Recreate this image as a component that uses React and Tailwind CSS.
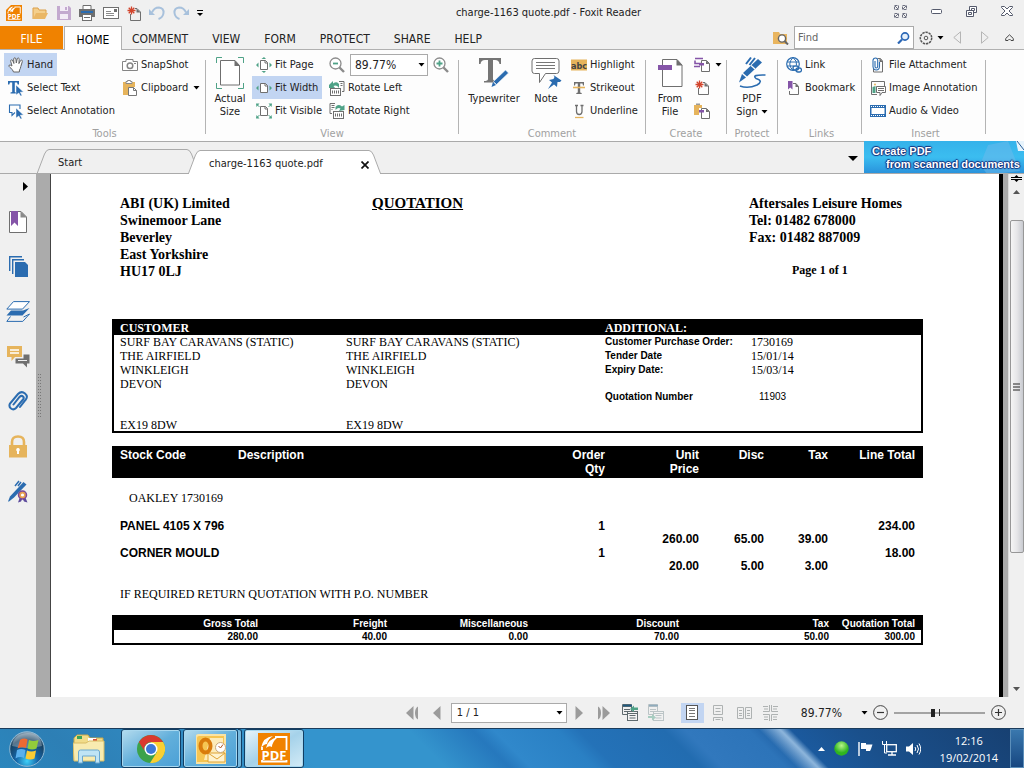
import React from "react";

const ui = "font-['DejaVu_Sans_Condensed','DejaVu_Sans',sans-serif]";
const serif = "font-['Liberation_Serif',serif]";
const sans = "font-['Liberation_Sans',sans-serif]";

const GREY = "#6f6f6f";
const BLUE = "#2b6cb0";
const GREEN = "#4fa287";
const GOLD = "#e6b45c";
const PURPLE = "#8555a8";
const RED = "#d2452d";

function Icon({ w = 16, h = 16, box, children, className = "" }) {
  return (
    <svg width={w} height={h} viewBox={box || `0 0 ${w} ${h}`} fill="none" aria-hidden="true" className={"shrink-0 " + className}>
      {children}
    </svg>
  );
}

const Caret = ({ className = "" }) => (
  <Icon w={7} h={4} className={className}>
    <path d="M0.5 0h6L3.5 3.6z" fill="#000" />
  </Icon>
);

const Star = ({ x, y, r = 4 }) => (
  <g stroke={RED} strokeWidth="1.3" transform={`translate(${x} ${y})`}>
    <path d={`M0 ${-r}V${r}M${-r} 0H${r}M${-r * 0.7} ${-r * 0.7}L${r * 0.7} ${r * 0.7}M${-r * 0.7} ${r * 0.7}L${r * 0.7} ${-r * 0.7}`} />
  </g>
);

const FoxitLogo = ({ size = 16, className }) => (
  <Icon w={size} h={size} box="0 0 32 32" className={className}>
    <path d={size > 16 ? "M0 0H32V32H0z" : "M10 0H32V32H0V10z"} fill="#f08200" />
    <path d="M4 14v14.500h24.500V4H17" stroke="#fff" strokeWidth="1.8" />
    <path d="M3 15Q5 4 15 3Q10 6 9 11Q6 11 3 15zM8 15Q10 6 20 4Q14 9 14 14Q11 12 8 15z" fill="#fff" />
    <rect x="2" y="17" width="28" height="10" fill="#f08200" />
    <text x="16" y="27" textAnchor="middle" fontSize="13" fontWeight="bold" fill="#fff" fontFamily="Open Sans, sans-serif">PDF</text>
  </Icon>
);

const icons = {
  open: (
    <Icon w={17} h={14}>
      <path d="M1 13V2h5l1 2h7v3" fill="#f4cf8c" stroke="#dba04a" />
      <path d="M1 13L4 7h12l-3 6z" fill="#eab765" />
    </Icon>
  ),
  save: (
    <Icon w={14} h={14}>
      <path d="M0 0h12l2 2v12H0z" fill="#c3aacf" />
      <rect x="3" y="0" width="8" height="5" fill="#f3edf6" />
      <rect x="8" y="1" width="2" height="3" fill="#c3aacf" />
      <rect x="3" y="8" width="8" height="5" fill="#f3edf6" />
    </Icon>
  ),
  print: (
    <Icon w={16} h={16}>
      <path d="M4 5V.5h8V5" stroke={GREY} fill="#fff" />
      <rect x="0" y="4" width="16" height="8" fill={GREY} />
      <rect x="2" y="6" width="12" height="2" fill={BLUE} />
      <rect x="3.5" y="9.5" width="9" height="6" fill="#fff" stroke={GREY} />
      <path d="M5 12.5h6" stroke={GREY} />
    </Icon>
  ),
  mail: (
    <Icon w={16} h={12}>
      <rect x=".5" y=".5" width="15" height="11" fill="#fff" stroke={GREY} />
      <path d="M3 4.500h5M3 6.500h8M3 8.500h8" stroke="#8b8b8b" />
      <rect x="11" y="2" width="3" height="3" fill={GREY} />
    </Icon>
  ),
  newDoc: (
    <Icon w={14} h={15}>
      <path d="M3.500 8v6.500h10V6L10 2.500H8" stroke={GREY} fill="none" />
      <path d="M9.500 2.500V6.500h4z" fill={GREY} />
      <Star x={4.5} y={4.5} r={4} />
    </Icon>
  ),
  undo: (
    <Icon w={16} h={14}>
      <path d="M3 6.500Q5 1.500 10 1.500Q15 2 14.500 7Q14 11.500 9.500 13" stroke="#a8c1dc" strokeWidth="2" />
      <path d="M0 3v6h6z" fill="#a8c1dc" />
    </Icon>
  ),
  redo: (
    <Icon w={16} h={14}>
      <path d="M13 6.500Q11 1.500 6 1.500Q1 2 1.500 7Q2 11.500 6.500 13" stroke="#a8c1dc" strokeWidth="2" />
      <path d="M16 3v6h-6z" fill="#a8c1dc" />
    </Icon>
  ),
  hand: (
    <Icon>
      <path d="M5.500 15Q5 12.500 2 10.500Q.3 9 1 8.200Q2 7.500 4 9L2.700 4.300Q2.500 3 3.500 2.800Q4.400 2.700 4.900 4L5.900 6.500 5.700 2Q5.800.8 6.700.8Q7.700.8 7.900 2L8.300 6 9.200 1.900Q9.500.8 10.400 1Q11.300 1.200 11.200 2.400L10.900 6.600 12.500 3.600Q13.100 2.800 13.900 3.200Q14.600 3.600 14.300 4.600L12.800 9.500Q12.400 12 11.500 13L11.300 15z" fill="#fff" stroke="#666" />
    </Icon>
  ),
  selectText: (
    <Icon>
      <path d="M0 1h11v3.500H9.700L9 2.500H6.800V12l1.700.6v.9H2.500v-.9L4.200 12V2.500H2L1.300 4.500H0z" fill={BLUE} />
      <path d="M8 5l7.500 7-3.200.2 1.800 3.300-1.600.5-1.700-3L8 15z" fill={BLUE} stroke="#fff" strokeWidth=".5" />
    </Icon>
  ),
  selectNote: (
    <Icon>
      <path d="M7 9.500l-3 3v-3H1.500V2H12v4" stroke={BLUE} strokeWidth="1.100" />
      <path d="M8 5l7.500 7-3.200.2 1.800 3.300-1.600.5-1.700-3L8 15z" fill={BLUE} stroke="#fff" strokeWidth=".5" />
    </Icon>
  ),
  camera: (
    <Icon w={16} h={12}>
      <path d="M.5 2.500H4V.5h7v2h4.500v9H.5z" stroke="#858585" fill="#fff" />
      <circle cx="8" cy="6.800" r="2.800" stroke="#858585" strokeWidth="1.500" />
      <path d="M12 4.500h2" stroke="#858585" />
    </Icon>
  ),
  clipboard: (
    <Icon>
      <path d="M1 2h12v5H7v8H1z" fill={GOLD} />
      <path d="M4 3.500V1.500h1.500V.5h3v1H10v2z" fill="#fff" stroke="#888" />
      <path d="M6.500 7.500h5l3 3v5h-8z" fill="#fff" stroke="#777" />
      <path d="M11.500 7.500v3h3" stroke="#777" />
    </Icon>
  ),
  actual: (
    <Icon w={28} h={32}>
      <path d="M.5 6V.5H6M22 .5h5.500V6M27.500 26v5.500H22M6 31.500H.5V26" stroke={GREEN} />
      <path d="M4.500 3.500h14.500l4.500 5v19.500h-19z" fill="#fff" stroke={GREY} />
      <path d="M18.500 3l5.500 6h-5.500z" fill={GREY} />
    </Icon>
  ),
  fitPage: (
    <Icon>
      <path d="M4.500 3.500h5l2 2v7h-7z" fill="#fff" stroke={GREY} />
      <path d="M9 3.500V6h2.500" stroke={GREY} />
      <path d="M5.500 2h4.500L8 0zM5.500 14h4.500l-2 2zM2.500 5.500v5L0 8zM13.500 5.500v5L16 8z" fill={GREEN} />
    </Icon>
  ),
  fitWidth: (
    <Icon>
      <path d="M4.500 3.500h5l2 2v7h-7z" fill="#fff" stroke={GREY} />
      <path d="M9 3.500V6h2.500" stroke={GREY} />
      <path d="M2.500 5.500v5L0 8zM13.500 5.500v5L16 8z" fill={GREEN} />
    </Icon>
  ),
  fitVisible: (
    <Icon>
      <path d="M4.500 3.500h5l2 2v7h-7z" fill="#fff" stroke={GREY} />
      <path d="M9 3.500V6h2.500" stroke={GREY} />
      <path d="M0 .5h3.500L.5 4zM16 .5h-3.500L15.500 4zM0 15.500h3.500L.5 12zM16 15.500h-3.500L15.500 12z" fill={GREEN} />
      <path d="M1 1.500l2.500 2.500M15 1.500L12.500 4M1 14.500L3.500 12M15 14.500L12.500 12" stroke={GREEN} />
    </Icon>
  ),
  rotL: (
    <Icon>
      <path d="M10 1.500h5v10h-2M11.500 3.500h2M11.500 5.500h2" stroke={GREY} />
      <rect x="1.500" y="8.500" width="10" height="7" fill="#fff" stroke={GREY} />
      <path d="M3.500 13.500v-3M5.500 13.500v-3M7.500 13.500v-3M9.500 13.500v-3" stroke={GREY} />
      <path d="M0 5l4-4v2.500Q8 1 10 4v4Q7.500 4.500 4.500 6L6 8H0z" fill={GREEN} />
    </Icon>
  ),
  rotR: (
    <Icon>
      <path d="M6 .5H1v10h2M2.500 2.500h3M2.500 4.500h3M2.500 6.500h1" stroke={GREY} />
      <rect x="4.500" y="8.500" width="10" height="7" fill="#fff" stroke={GREY} />
      <path d="M6.500 13.500v-3M8.500 13.500v-3M10.500 13.500v-3M12.500 13.500v-3" stroke={GREY} />
      <path d="M15.500 7V2L13 3.500Q9 .5 6.500 4v3Q9 4 11.500 5.500L10 8z" fill={GREEN} />
    </Icon>
  ),
  zoomOut: (
    <Icon>
      <circle cx="6.500" cy="6.500" r="5.500" stroke="#8b8b8b" strokeWidth="1.300" fill="#fff" />
      <path d="M4 6.500h5" stroke={GREEN} strokeWidth="1.800" />
      <path d="M10.500 10.500L15 15" stroke="#8b8b8b" strokeWidth="2.400" />
    </Icon>
  ),
  zoomIn: (
    <Icon>
      <circle cx="6.500" cy="6.500" r="5.500" stroke="#8b8b8b" strokeWidth="1.300" fill="#fff" />
      <path d="M3.500 6.500h6M6.500 3.500v6" stroke={GREEN} strokeWidth="1.800" />
      <path d="M10.500 10.500L15 15" stroke="#8b8b8b" strokeWidth="2.400" />
    </Icon>
  ),
  typewriter: (
    <Icon w={30} h={32}>
      <path d="M0 1h22v6h-1.500Q20 3 16 3h-2v19q0 2 4 2v1.500H5V24q4 0 4-2V3H6Q2 3 1.500 7H0z" fill="#757575" />
      <path d="M26.500 13l3 3-12 11.500-3-3z" fill={BLUE} stroke="#fff" strokeWidth=".6" />
      <path d="M14 25l3 3L12.500 30z" fill={BLUE} />
    </Icon>
  ),
  note: (
    <Icon w={31} h={32}>
      <path d="M3.500 1.500h22q2.500 0 2.500 2.500v10q0 2.500-2.500 2.500H14.500L8.500 25.500V16.500h-5Q1 16.500 1 14V4q0-2.500 2.500-2.500z" fill="#fff" stroke={GREY} />
      <path d="M5 5.500h19M5 8.500h19M5 11.500h19" stroke="#777" />
      <path d="M22.500 18l8 5.500-1.500 1.500-2.500 0-.5 5-3-2.500-6 4.500 4-6.500-3-2.500 4.500-1 1-2z" fill={BLUE} />
    </Icon>
  ),
  abc: (
    <Icon w={16} h={12}>
      <rect width="16" height="11" y=".5" fill={GOLD} />
      <text x="8" y="9.500" textAnchor="middle" fontSize="9" fontWeight="bold" fontFamily="DejaVu Sans Condensed, sans-serif" fill="#444">abc</text>
    </Icon>
  ),
  strike: (
    <Icon>
      <path d="M3 2h10v3.500h-1L11.500 3.500H9.200v9l1.500.6v.9H5.300v-.9l1.500-.6v-9H4.500L4 5.500H3z" fill={GREY} />
      <path d="M2 7.500h12" stroke={GOLD} strokeWidth="1.600" />
    </Icon>
  ),
  under: (
    <Icon>
      <path d="M4 2.500h3M9.500 2.500h3M5.500 2.500v6q0 3 2.700 3t2.800-3v-6" stroke={GREY} strokeWidth="1.300" />
      <path d="M4 14.500h8.500" stroke={GOLD} strokeWidth="1.300" />
    </Icon>
  ),
  fromFile: (
    <Icon w={25} h={30}>
      <path d="M4.500 1.500h14.500l5 5.500v21.500H4.500z" fill="#fff" stroke={GREY} />
      <path d="M18.500 1l6 6.500h-6z" fill={GREY} />
      <rect x="0" y="7" width="14" height="5" fill={PURPLE} />
    </Icon>
  ),
  scan: (
    <Icon w={16} h={15}>
      <path d="M1 1.500h8M1 3.500v3h6M0 9.500h6" stroke={PURPLE} strokeWidth="1.600" />
      <path d="M7.500 3.500h5l3 3v8h-8z" fill="#fff" stroke={GREY} />
      <path d="M12 3.500V7h3.500z" fill={GREY} />
      <rect x="5" y="6" width="5" height="2.500" fill={PURPLE} />
    </Icon>
  ),
  pasteNew: (
    <Icon>
      <path d="M0 2h8v3H5v7H0z" fill={GOLD} />
      <path d="M2 2V.5h4V2z" fill="#999" />
      <path d="M7.500 5.500h5l3 3v7h-8z" fill="#fff" stroke={GREY} />
      <path d="M12 5.500V9h3.500z" fill={GREY} />
      <rect x="5" y="7" width="5" height="2.500" fill={PURPLE} />
    </Icon>
  ),
  sign: (
    <Icon w={30} h={34}>
      <path d="M9 8L14 1.500M12.500 9L18 2" stroke={BLUE} strokeWidth="2" />
      <path d="M21 3l4 3.500L10 20.500 6 17z" fill={BLUE} />
      <path d="M14 9.500l4 3.500" stroke="#fdfdfd" strokeWidth="1.200" />
      <path d="M5 18l4 3.500-7 5z" fill={BLUE} />
      <path d="M3 30q8 3 17-1q7-4-1-6.500q-5-4 9.500-3.500" stroke={BLUE} strokeWidth="1.600" />
    </Icon>
  ),
  link: (
    <Icon>
      <circle cx="7" cy="7" r="6.300" stroke={BLUE} strokeWidth="1.200" />
      <path d="M1 5h12M1 9h7M7 .5q-6.500 6.500 0 13M7 .5q4.500 3.500 3.500 8" stroke={BLUE} />
      <rect x="7" y="9" width="5.500" height="4" rx="2" fill="#fff" stroke={BLUE} strokeWidth="1.300" />
      <rect x="10" y="11" width="5.500" height="4" rx="2" stroke={BLUE} strokeWidth="1.300" />
    </Icon>
  ),
  bookmark: (
    <Icon>
      <path d="M7 3.500h3l2.500 3v8h-9V11" stroke={GREY} />
      <path d="M9.500 3v4H13z" fill={GREY} />
      <path d="M2 1h4.500v8.500L4.200 7.500 2 9.500z" fill={PURPLE} />
    </Icon>
  ),
  attach: (
    <Icon>
      <path d="M7.500 1.500h3l2 2.500v11h-9V12" stroke={GREY} />
      <path d="M9.500 1v4H13z" fill={GREY} />
      <path d="M5 4v5.500q0 1.500 1.300 1.500t1.400-1.500V3Q7.500 1 5.500 1T3 3v6.500q.3 3.500 3.300 3.500t3.200-3.500V5" stroke={BLUE} strokeWidth="1.100" />
    </Icon>
  ),
  image: (
    <Icon>
      <path d="M14.500 6V1.500h-13v13H7" stroke={GREY} />
      <path d="M2.500 13V7l3-1v7z" fill={GREEN} />
      <circle cx="5" cy="4.500" r="1" fill={GOLD} />
      <path d="M6.500 6.500h9v6H12l-2 3v-3H6.500z" fill="#fff" stroke={GREY} />
      <path d="M8 8.500h6M8 10.500h6" stroke={GREY} />
    </Icon>
  ),
  video: (
    <Icon w={16} h={12}>
      <rect width="16" height="12" fill={BLUE} />
      <rect x="1.500" y="3" width="13" height="6" fill="#fff" />
      <path d="M1 1.500h14M1 10.500h14" stroke="#fff" strokeDasharray="1 1" />
    </Icon>
  ),
};

function RibbonButton({ icon, children, active, caret, label }) {
  return (
    <button
      type="button"
      aria-label={label}
      className={"flex h-[23px] w-fit items-center gap-[3px] whitespace-nowrap px-1 " + (active ? "bg-[#c2d5f2]" : "")}
    >
      <span className="flex w-4 shrink-0 justify-center">{icon}</span>
      {children}
      {caret && <Caret className="ml-[2px]" />}
    </button>
  );
}

function BigButton({ icon, children, className }) {
  return (
    <button type="button" className={"flex h-[69px] flex-col items-center leading-[13px] " + className}>
      <span className="flex h-[39px] items-center">{icon}</span>
      <span className="text-center">{children}</span>
    </button>
  );
}

function Group({ name, className, children }) {
  return (
    <>
      <section aria-label={name} className={"flex shrink-0 flex-col pt-[3px] " + className}>
        <div className="flex h-[69px]">{children}</div>
        <h2 className="pt-[5px] text-center leading-[14px] text-[#a0a0a0]">{name}</h2>
      </section>
      <span className="mt-[10px] h-[74px] w-px shrink-0 bg-[#b4b4b4]" />
    </>
  );
}

function Header() {
  return (
    <header className="flex h-[26px] items-center justify-between">
      <div className="flex items-center gap-2 pl-[6px]">
        <FoxitLogo className="mr-[2px]" />
        {[["Open", icons.open], ["Save", icons.save], ["Print", icons.print], ["Email", icons.mail], ["New", icons.newDoc], ["Undo", icons.undo], ["Redo", icons.redo]].map(([n, i]) => (
          <button key={n} type="button" aria-label={n}>{i}</button>
        ))}
        <button type="button" aria-label="Customise toolbar">
          <Icon w={6} h={6}><path d="M0 .5h6" stroke="#000" /><path d="M0 3h6L3 6z" fill="#000" /></Icon>
        </button>
      </div>
      <h1>charge-1163 quote.pdf - Foxit Reader</h1>
      <div className="flex items-center gap-6 pb-1 pr-[11px]">
        <button type="button" aria-label="Full screen">
          <Icon w={13} h={13}>
            <g stroke="#6d7080"><path d="M.5 4.500v-4h4v4zM8.500 4.500v-4h4v4zM.5 12.500v-4h4v4zM8.500 12.500v-4h4v4z" strokeDasharray="3 1" /><path d="M1 1l3 3M12 1L9 4M1 12l3-3M12 12L9 9" /></g>
          </Icon>
        </button>
        <button type="button" aria-label="Minimise"><Icon w={11} h={5}><rect x=".5" y=".5" width="10" height="4" rx="1" stroke="#555a6c" fill="#fff" /></Icon></button>
        <button type="button" aria-label="Restore">
          <Icon w={11} h={11}><g stroke="#555a6c" fill="#fff"><path d="M3.500.5h7v6h-7z" /><path d="M5.500 2.500h3v2h-3z" /><path d="M.5 4.500h7v6h-7z" /><path d="M2.500 6.500h3v2h-3z" /></g></Icon>
        </button>
        <button type="button" aria-label="Close"><Icon w={12} h={10}><path d="M.5.5h3L6 3 8.500.5h3v1L8 5l3.500 3.500v1h-3L6 7 3.500 9.500h-3v-1L4 5 .5 1.500z" stroke="#555a6c" fill="#fff" /></Icon></button>
      </div>
    </header>
  );
}

function RibbonTabs() {
  return (
    <nav className="flex h-6 items-stretch border-b border-[#b0b0b0] text-[12px]">
      <button type="button" className="w-[63px] bg-[#f08200] pt-[3px] text-white">FILE</button>
      <button type="button" aria-current="page" className="-mb-px ml-px w-[58px] border border-b-0 border-[#b0b0b0] bg-white pt-[2px] text-black">HOME</button>
      {["COMMENT", "VIEW", "FORM", "PROTECT", "SHARE", "HELP"].map((t, i) => (
        <button key={t} type="button" className={"pt-[3px] " + (i ? "px-3" : "pl-[10px] pr-3")}>{t}</button>
      ))}
      <div className="ml-auto flex items-center pr-[10px]">
        <button type="button" aria-label="Search folder">
          <Icon w={16} h={14}>
            <path d="M0 1h6l1 2h7v10H0z" fill="#e9b55f" />
            <circle cx="9" cy="7.500" r="3.600" fill="#fff" stroke="#666" strokeWidth="1.400" />
            <path d="M11.500 10L15 13.500" stroke="#666" strokeWidth="2" />
          </Icon>
        </button>
        <label className="ml-[5px] flex h-[23px] w-[120px] items-center border border-[#aaa] bg-white px-[3px]">
          <input aria-label="Find" placeholder="Find" className="w-full min-w-0 text-[11px] outline-none placeholder:text-[#666]" />
          <Icon w={13} h={12}>
            <circle cx="8" cy="4.500" r="3.600" stroke="#2a66b5" strokeWidth="1.600" fill="#e6f0fa" />
            <path d="M5 7.500L1 11.500" stroke="#2a66b5" strokeWidth="2.200" />
          </Icon>
        </label>
        <button type="button" aria-label="Settings" className="ml-[5px] flex items-center gap-1">
          <Icon w={14} h={14}>
            <circle cx="7" cy="7" r="5.700" stroke="#555" strokeWidth="1.500" strokeDasharray="2.400 .8" />
            <circle cx="7" cy="7" r="1.800" stroke="#555" />
          </Icon>
          <Caret />
        </button>
        <button type="button" aria-label="Previous" className="ml-[9px]"><Icon w={8} h={13}><path d="M7.500.8v11.400L.8 6.500z" stroke="#b5b5b5" /></Icon></button>
        <button type="button" aria-label="Next" className="ml-5"><Icon w={8} h={13}><path d="M.5.8v11.400L7.200 6.500z" stroke="#b5b5b5" /></Icon></button>
        <button type="button" aria-label="Collapse ribbon" className="ml-4"><Icon w={9} h={7}><path d="M.7 4.500L4.500.8l3.800 3.700v2H6L4.500 5 3 6.500H.7z" stroke="#444" /></Icon></button>
      </div>
    </nav>
  );
}

function Ribbon() {
  return (
    <div className="flex h-[92px] overflow-hidden border-b border-[#aaa] bg-[#fdfdfd]">
      <Group name="Tools" className="w-[205px] pl-1">
        <div className="w-[114px]">
          <RibbonButton icon={icons.hand} active>Hand</RibbonButton>
          <RibbonButton icon={icons.selectText}>Select Text</RibbonButton>
          <RibbonButton icon={icons.selectNote}>Select Annotation</RibbonButton>
        </div>
        <div>
          <RibbonButton icon={icons.camera}>SnapShot</RibbonButton>
          <RibbonButton icon={icons.clipboard} caret>Clipboard</RibbonButton>
        </div>
      </Group>
      <Group name="View" className="w-[252px]">
        <BigButton icon={icons.actual} className="w-[46px] pl-[2px]">Actual<br />Size</BigButton>
        <div className="w-[73px]">
          <RibbonButton icon={icons.fitPage}>Fit Page</RibbonButton>
          <RibbonButton icon={icons.fitWidth} active>Fit Width</RibbonButton>
          <RibbonButton icon={icons.fitVisible}>Fit Visible</RibbonButton>
        </div>
        <div>
          <div className="flex h-[23px] items-center gap-[5px] pl-1">
            <button type="button" aria-label="Zoom out">{icons.zoomOut}</button>
            <span className="relative flex items-center">
              <select aria-label="Zoom" className="h-[22px] w-[78px] appearance-none border border-[#aaa] bg-white pl-1 text-[12px]">
                <option>89.77%</option>
              </select>
              <Caret className="pointer-events-none absolute right-[3px]" />
            </span>
            <button type="button" aria-label="Zoom in">{icons.zoomIn}</button>
          </div>
          <RibbonButton icon={icons.rotL}>Rotate Left</RibbonButton>
          <RibbonButton icon={icons.rotR}>Rotate Right</RibbonButton>
        </div>
      </Group>
      <Group name="Comment" className="w-[186px]">
        <BigButton icon={icons.typewriter} className="w-[66px] pl-1">Typewriter</BigButton>
        <BigButton icon={icons.note} className="w-[42px]">Note</BigButton>
        <div>
          <RibbonButton icon={icons.abc}>Highlight</RibbonButton>
          <RibbonButton icon={icons.strike}>Strikeout</RibbonButton>
          <RibbonButton icon={icons.under}>Underline</RibbonButton>
        </div>
      </Group>
      <Group name="Create" className="w-[80px]">
        <BigButton icon={icons.fromFile} className="w-[46px] pl-1">From<br />File</BigButton>
        <div>
          <RibbonButton icon={icons.scan} caret label="From scanner" />
          <RibbonButton icon={icons.newDoc} label="Blank page" />
          <RibbonButton icon={icons.pasteNew} label="From clipboard" />
        </div>
      </Group>
      <Group name="Protect" className="w-[50px]">
        <BigButton icon={icons.sign} className="w-full">
          PDF<br /><span className="flex items-center gap-[3px]">Sign <Caret /></span>
        </BigButton>
      </Group>
      <Group name="Links" className="w-[83px] pl-1">
        <div>
          <RibbonButton icon={icons.link}>Link</RibbonButton>
          <RibbonButton icon={icons.bookmark}>Bookmark</RibbonButton>
        </div>
      </Group>
      <Group name="Insert" className="w-[123px] pl-1">
        <div>
          <RibbonButton icon={icons.attach}>File Attachment</RibbonButton>
          <RibbonButton icon={icons.image}>Image Annotation</RibbonButton>
          <RibbonButton icon={icons.video}>Audio &amp; Video</RibbonButton>
        </div>
      </Group>
    </div>
  );
}

function DocTab({ active, children, className }) {
  const fill = active ? "#fff" : "#f0f0f0";
  return (
    <div className={"flex h-6 " + className}>
      <Icon w={12} h={24}><path d="M0 24L7.500 5Q9.500.5 12 .5V24z" fill={fill} /><path d="M.3 24L7.500 5Q9.500.5 12 .5" stroke="#aaa" /></Icon>
      <div className={"flex flex-1 items-center justify-between border-t border-[#aaa] pt-[2px] " + (active ? "bg-white" : "")}>{children}</div>
      <Icon w={12} h={24}><path d="M12 24L4.500 5Q2.500.5 0 .5V24z" fill={fill} /><path d="M11.700 24L4.500 5Q2.500.5 0 .5" stroke="#aaa" /></Icon>
    </div>
  );
}

function DocTabs() {
  return (
    <div className="flex h-8 items-end border-b border-[#aaa]">
      <DocTab className="ml-[37px] w-[162px]"><a href="#start" className="pl-[9px]">Start</a></DocTab>
      <DocTab active className="-mb-px -ml-[11px] w-[193px]">
        <a href="#quote" className="whitespace-nowrap pl-[9px]">charge-1163 quote.pdf</a>
        <button type="button" aria-label="Close tab" className="pt-[2px]"><Icon w={8} h={8}><path d="M.5.5l7 7M7.500.5l-7 7" stroke="#111" strokeWidth="1.700" /></Icon></button>
      </DocTab>
      <button type="button" aria-label="Tab list" className="mb-3 ml-auto mr-[6px]"><Icon w={10} h={5}><path d="M0 0h10L5 5z" fill="#000" /></Icon></button>
      <a href="#scan" className="relative h-8 w-[160px] overflow-hidden bg-linear-to-b from-[#35b2ea] via-[#3bbdf0] to-[#2a93dc] pl-2 font-['Liberation_Sans',sans-serif] text-[11px] font-bold leading-[13px] text-white [text-shadow:1px_0_1px_#15307c,-1px_0_1px_#15307c,0_1px_1px_#15307c,0_-1px_1px_#15307c]">
        <Icon w={50} h={32} className="absolute right-0 top-0">
          <path d="M14 4l20-4 12 30-32 4-8-10z" fill="#6db9ec" opacity=".5" />
          <path d="M42 0h8v10h-6z" fill="#e8f4fc" /><path d="M43 0l7 9" stroke="#2a5f9a" />
        </Icon>
        <span className="relative block pt-[4px]">Create PDF</span>
        <span className="relative block whitespace-nowrap pl-[14px]">from scanned documents</span>
      </a>
    </div>
  );
}

const sideIcons = [
  ["Bookmarks", <Icon w={18} h={22}><path d="M.5.500h11.500l5.500 5.500v15.500H.5z" fill="#fff" stroke={GREY} /><path d="M11.500 0l6.500 6.500h-6.500z" fill="#8a8a8a" /><path d="M2 0h7v15l-3.500-3.500L2 15z" fill={PURPLE} /></Icon>],
  ["Pages", <Icon w={19} h={21}><path d="M.7 15V.7H13M3.700 18V3.700H15" stroke={BLUE} strokeWidth="1.400" /><path d="M6 6h10l3 3v12H6z" fill={BLUE} /></Icon>],
  ["Layers", <Icon w={24} h={21}><path d="M7.500.6h16l-7 7.500H.8z" fill="#fff" stroke={BLUE} /><path d="M5 9.500l-4.500 5h16L23.500 7 17 9.500z" fill={BLUE} /><path d="M4.500 15.500L.8 20.400h16L23.500 13l-6 3" stroke={BLUE} /></Icon>],
  ["Comments", <Icon w={23} h={23}><path d="M0 1h15v11H8l-3.500 4v-4H0z" fill={GOLD} /><path d="M3 5h9M3 8h9" stroke="#fff" strokeWidth="1.300" /><path d="M8.500 13.500h8V9.500H22.500v9H20v4l-4-4H8.500z" fill={GREY} /><path d="M11 15.500h9" stroke="#eee" /></Icon>],
  ["Attachments", <Icon w={20} h={22}><path d="M5.500 13.500l6-7.500q2-2 3.500-.5t0 3L8 17Q5.500 19.500 3 17.500T2 12.500l8-9.500Q13.500-.5 17 2.500T17.500 9L12 16" stroke={BLUE} strokeWidth="2" strokeLinecap="round" /></Icon>],
  ["Security", <Icon w={18} h={23}><path d="M3 11V7q0-5.500 6-5.500T15 7v4" stroke={GOLD} strokeWidth="2.600" /><rect y="10" width="18" height="12.500" fill={GOLD} /><path d="M9 13a1.800 1.800 0 011 3.300V19H8v-2.700A1.800 1.800 0 019 13z" fill="#fff" /></Icon>],
  ["Signatures", <Icon w={21} h={23}><path d="M7 6l4-5M10 6l3-4" stroke={BLUE} strokeWidth="1.500" /><path d="M15.500 2l3 2.500L6 17.500l-5 4H0l2-5z" fill={BLUE} /><path d="M12 17l-2 5.500 3-1 1.500-3 1.500 3 3.500 1-2.500-6z" fill="#5d4a9c" /><circle cx="14.500" cy="15" r="4" fill="#e9a04e" stroke="#7b4a9a" strokeWidth="1.500" /><circle cx="14.500" cy="15" r="1.600" fill="#fff" /></Icon>],
];

function Sidebar() {
  return (
    <aside className="flex w-9 shrink-0 flex-col items-center pt-2">
      <button type="button" aria-label="Expand panel" className="ml-auto mr-2"><Icon w={5} h={9}><path d="M0 0l5 4.500L0 9z" fill="#000" /></Icon></button>
      <div className="flex flex-col pt-[8px]">
        {sideIcons.map(([n, i]) => (
          <button key={n} type="button" aria-label={n} className="flex h-[45px] w-[34px] items-center justify-center">{i}</button>
        ))}
      </div>
    </aside>
  );
}

const addr = ["SURF BAY CARAVANS (STATIC)", "THE AIRFIELD", "WINKLEIGH", "DEVON"];
function Address() {
  return (
    <address className="not-italic">
      {addr.map((l) => <div key={l}>{l}</div>)}
      <div className="pt-[27px]">EX19 8DW</div>
    </address>
  );
}

function Quote() {
  const items = [
    ["PANEL 4105 X 796", "1", "260.00", "65.00", "39.00", "234.00"],
    ["CORNER MOULD", "1", "20.00", "5.00", "3.00", "18.00"],
  ];
  return (
    <main className={"min-w-0 flex-1 border-l border-[#444] bg-white pl-[61px] pr-[76px] pt-[21px] text-[12px] leading-[14px] text-black " + serif}>
      <div className="flex justify-between px-2 text-[14px] font-bold leading-[17px]">
        <div className="w-[252px]">ABI (UK) Limited<br />Swinemoor Lane<br />Beverley<br />East Yorkshire<br />HU17 0LJ</div>
        <h2 className="mr-auto text-[15px] underline">QUOTATION</h2>
        <div className="w-[166px]">
          Aftersales Leisure Homes<br />Tel: 01482 678000<br />Fax: 01482 887009
          <div className="pl-[43px] pt-4 text-[12px]">Page 1 of 1</div>
        </div>
      </div>

      <section className="mt-[39px] border-2 border-black">
        <div className="flex h-[14px] bg-black pl-[6px] font-bold text-white">
          <h3 className="flex-1">CUSTOMER</h3>
          <h3 className="w-[316px]">ADDITIONAL:</h3>
        </div>
        <div className="flex h-24 pl-[6px]">
          <div className="w-[226px]"><Address /></div>
          <div className="flex-1"><Address /></div>
          <dl className="grid w-[316px] grid-cols-[146px_1fr] content-start">
            <dt className={"text-[10px] font-bold " + sans}>Customer Purchase Order:</dt><dd>1730169</dd>
            <dt className={"text-[10px] font-bold " + sans}>Tender Date</dt><dd>15/01/14</dd>
            <dt className={"text-[10px] font-bold " + sans}>Expiry Date:</dt><dd>15/03/14</dd>
            <dt className={"pt-[13px] text-[10px] font-bold " + sans}>Quotation Number</dt><dd className={"pl-2 pt-[13px] text-[10px] " + sans}>11903</dd>
          </dl>
        </div>
      </section>

      <table className={"mt-[13px] w-full table-fixed text-right text-[12px] font-bold " + sans}>
        <colgroup>
          <col className="w-[126px]" /><col /><col className="w-[100px]" /><col className="w-[94px]" /><col className="w-[65px]" /><col className="w-[64px]" /><col className="w-[95px]" />
        </colgroup>
        <thead className="bg-black text-white">
          <tr className="h-8 align-top">
            <th className="pl-2 pt-[2px] text-left">Stock Code</th>
            <th className="pt-[2px] text-left">Description</th>
            <th className="pt-[2px]">Order<br />Qty</th>
            <th className="pt-[2px]">Unit<br />Price</th>
            <th className="pt-[2px]">Disc</th>
            <th className="pt-[2px]">Tax</th>
            <th className="pr-2 pt-[2px]">Line Total</th>
          </tr>
        </thead>
        <tbody>
          <tr><td colSpan={7} className={"h-[41px] pb-[2px] pl-[17px] text-left font-normal " + serif}>OAKLEY 1730169</td></tr>
          {items.map((r) => (
            <tr key={r[0]} className="h-[27px] align-top">
              <td colSpan={2} className="pl-2 text-left">{r[0]}</td>
              <td>{r[1]}</td>
              <td className="pt-[13px]">{r[2]}</td>
              <td className="pt-[13px]">{r[3]}</td>
              <td className="pt-[13px]">{r[4]}</td>
              <td className="pr-2">{r[5]}</td>
            </tr>
          ))}
        </tbody>
      </table>

      <p className="pl-2 pt-[14px]">IF REQUIRED RETURN QUOTATION WITH P.O. NUMBER</p>

      <table className={"mt-[14px] w-full table-fixed border-2 border-black text-right text-[10px] font-bold leading-[13px] " + sans}>
        <thead className="bg-black text-white">
          <tr className="whitespace-nowrap">
            <th className="w-[145px]">Gross Total</th><th className="w-[129px]">Freight</th><th>Miscellaneous</th><th className="w-[151px]">Discount</th><th className="w-[150px]">Tax</th><th className="w-[93px] pr-[6px]">Quotation Total</th>
          </tr>
        </thead>
        <tbody>
          <tr>
            <td>280.00</td><td>40.00</td><td>0.00</td><td>70.00</td><td>50.00</td><td className="pr-[6px]">300.00</td>
          </tr>
        </tbody>
      </table>
    </main>
  );
}

function ScrollBar() {
  return (
    <div className="flex w-4 shrink-0 flex-col items-center border-l border-[#ddd] bg-[#f0f0f0]">
      <Icon w={11} h={7} className="mt-px"><path d="M0 2.500h11M0 4.500h11" stroke="#000" /><path d="M3.500 2L5.500 0l2 2zM3.500 5l2 2 2-2z" fill="#000" /></Icon>
      <button type="button" aria-label="Scroll up" className="mt-px flex h-[18px] w-full items-center justify-center"><Icon w={7} h={4}><path d="M0 4h7L3.500 0z" fill="#555" /></Icon></button>
      <div className="mt-[19px] flex h-[333px] w-[14px] items-center justify-center rounded-[2px] border border-[#979797] bg-linear-to-r from-[#f5f5f5] via-[#e6e6e8] to-[#c8cad0]">
        <Icon w={7} h={8}><path d="M0 1h7M0 4h7M0 7h7" stroke="#666" strokeWidth="1.500" /></Icon>
      </div>
      <button type="button" aria-label="Scroll down" className="mt-auto flex h-[17px] w-full items-center justify-center"><Icon w={7} h={4}><path d="M0 0h7L3.500 4z" fill="#555" /></Icon></button>
    </div>
  );
}

const Tri = ({ flip, bar }) => (
  <Icon w={bar ? 12 : 8} h={14} className={flip ? "rotate-180" : ""}>
    <path d="M7.500 0v14L0 7z" fill="#9b9b9b" />
    {bar && <path d="M12 .5Q9 2 9 7T12 13.500z" fill="#9b9b9b" />}
  </Icon>
);

const Sheets = ({ faded, fwd }) => (
  <Icon w={17} h={17} className={faded ? "opacity-45" : ""}>
    <g stroke={faded ? "#7d8f95" : "#5f6a6e"}>
      <path d="M.5.500h9v10h-9zM.5 2.500h9M2 5.500h6M2 7.500h6" />
      <rect x="5.500" y="7.500" width="10" height="9" fill="#f4f4f4" /><path d="M5.500 9.500h10M7.500 11.500h6M7.500 14h6" />
    </g>
    <path d="M1 1.500h9" stroke="#1e5a80" strokeWidth="1.600" />
    <path d={fwd ? "M0 12h4v-2l4 3.500-4 3V14H0z" : "M16 3.500h-4v-2L8 5l4 3V6h4z"} fill={GREEN} />
  </Icon>
);

function StatusBar() {
  const views = [
    <Icon w={12} h={15}><rect x=".5" y=".5" width="11" height="14" fill="#fff" stroke="#555" /><path d="M3 3.500h6M3 5.500h6M3 8.500h6M3 11.500h6" stroke="#777" /></Icon>,
    <Icon w={12} h={16}><path d="M1.500.5h9v9h-9zM3.500 3.500h5M3.500 6.500h5M1.500 16v-3.500h9V16M3.500 14.500h5" stroke="#aeb2b2" /></Icon>,
    <Icon w={15} h={12}><path d="M.5.5h6v11h-6zM8.500.5h6v11h-6zM2 3.500h3M2 6.500h3M2 8.500h3M10 3.500h3M10 6.500h3M10 8.500h3" stroke="#aeb2b2" /></Icon>,
    <Icon w={15} h={16}><path d="M6.500 0v6.500H0M8.500 0v6.500H15M0 9.500h6.500V16M15 9.500H8.500V16M0 1.500h5M1 4h4M10 1.500h5M10 4h4M1 12h4M10 12h4M1 14.500h4M10 14.500h4" stroke="#aeb2b2" /></Icon>,
  ];
  return (
    <footer className="flex h-[31px] items-center justify-end pr-[18px]">
      <button type="button" aria-label="First page"><Tri bar /></button>
      <button type="button" aria-label="Previous page" className="ml-[15px]"><Tri /></button>
      <span className="relative ml-[10px] flex items-center">
        <select aria-label="Page" className="h-5 w-[116px] appearance-none border border-[#aaa] bg-white pl-[5px] text-[11px]"><option>1 / 1</option></select>
        <Caret className="pointer-events-none absolute right-1" />
      </span>
      <button type="button" aria-label="Next page" className="ml-2"><Tri flip /></button>
      <button type="button" aria-label="Last page" className="ml-[15px]"><Tri flip bar /></button>
      <button type="button" aria-label="Previous view" className="ml-3"><Sheets /></button>
      <button type="button" aria-label="Next view" className="ml-[9px]"><Sheets faded fwd /></button>
      <div className="ml-4 flex">
        {views.map((v, i) => (
          <button key={i} type="button" aria-label={["Single page", "Continuous", "Facing", "Continuous facing"][i]} className={"mr-[3px] flex h-5 w-[23px] items-center justify-center " + (i ? "" : "bg-[#c2d5f2]")}>{v}</button>
        ))}
      </div>
      <button type="button" className="ml-4 flex items-center gap-[19px] text-[12px]">89.77% <Caret /></button>
      <button type="button" aria-label="Zoom out" className="ml-[5px]"><Icon w={15} h={15}><circle cx="7.500" cy="7.500" r="6.900" stroke="#444" /><path d="M4 7.500h7" stroke="#333" strokeWidth="1.200" /></Icon></button>
      <span className="relative mx-[6px] flex w-[91px] items-center">
        <input type="range" aria-label="Zoom level" defaultValue="43" className="h-2 w-full appearance-none bg-linear-to-b from-transparent from-40% via-[#222] via-50% to-transparent to-60% [&::-webkit-slider-thumb]:h-2 [&::-webkit-slider-thumb]:w-1 [&::-webkit-slider-thumb]:appearance-none [&::-webkit-slider-thumb]:bg-[#222]" />
        <span className="absolute left-[45px] h-[7px] w-px bg-[#333]" />
      </span>
      <button type="button" aria-label="Zoom in"><Icon w={15} h={15}><circle cx="7.500" cy="7.500" r="6.900" stroke="#444" /><path d="M4 7.500h7M7.500 4v7" stroke="#333" strokeWidth="1.200" /></Icon></button>
    </footer>
  );
}

function TaskBar() {
  const task = "flex h-[39px] items-center justify-center rounded-[3px] border border-[#123e63] bg-linear-to-br shadow-[inset_0_0_0_1px_#a9d8ef]";
  const idle = " from-[#b4dcee] via-[#62afdb] to-[#4ba0d6]";
  return (
    <footer className="flex h-10 items-center border-t border-[#1b3c5c] bg-[linear-gradient(45deg,transparent_75%,rgba(190,220,245,0.7)_77%,transparent_78%),linear-gradient(45deg,#2b86bd_0%,#2d7fb5_8%,#3494cd_30%,#3494cd_42%,#2678bd_48%,#3088cb_50%,#2a80c4_56%,#2472b8_58%,#226cb0_66%,#3178bd_68%,#2d74b9_74%,#1b5ba0_77%,#1a508c_84%,#173f70_100%)] text-white">
      <button type="button" aria-label="Start" className="ml-[9px]">
        <Icon w={36} h={36}>
          <defs>
            <radialGradient id="orb" cx=".5" cy=".85" r=".9"><stop offset="0" stopColor="#3fd0f8" /><stop offset=".35" stopColor="#1565a8" /><stop offset=".7" stopColor="#17405f" /><stop offset="1" stopColor="#a8bccb" /></radialGradient>
          </defs>
          <circle cx="18" cy="18" r="17.300" fill="url(#orb)" stroke="#8fb9d4" />
          <path d="M3 15Q5 3 18 2T33 15Q18 19 3 15z" fill="#fff" opacity=".28" />
          <path d="M11 9q4-2.500 7.500-.5l-1.500 8.500q-4-1.500-8.500.5z" fill="#ee6a33" />
          <path d="M20 9q4 2 9.500 0l-2 8.500q-4 2-9 0z" fill="#92cc3b" />
          <path d="M8 19q4-2 8.500 0L15 27q-4-2-8.500.5z" fill="#5ab0ee" />
          <path d="M18 19.500q4 2 9 0L25.500 27.500q-4 2-9 0z" fill="#fbcb35" />
        </Icon>
      </button>
      <button type="button" aria-label="Explorer" className="ml-7">
        <Icon w={32} h={30}>
          <path d="M1 4l3-3h11l2 3h13v22H1z" fill="#f1dc8a" stroke="#c9a849" />
          <path d="M4 2h5v3H4z" fill="#3aa45a" /><path d="M15 4h8v3h-8z" fill="#fff" /><path d="M20 5h4v2h-4z" fill="#d9503a" />
          <path d="M0 9h13l3-2h15v20H1z" fill="#f8ebb0" stroke="#d8bc65" />
          <path d="M5.500 29V18q0-2 2-2h17q2 0 2 2v11h-4v-7h-13v7z" fill="#bfe4f5" stroke="#6ba8cf" />
        </Icon>
      </button>
      <button type="button" aria-label="Chrome" className={"ml-4 w-[60px] " + task + idle}>
        <Icon w={28} h={28}>
          <circle cx="14" cy="14" r="14" fill="#3ba24b" />
          <path d="M14 7h12.100A14 14 0 0113 28l7-11z" fill="#f9cf33" />
          <path d="M1.900 7A14 14 0 0126.100 7H14a7 7 0 00-6.500 9z" fill="#d93a2e" />
          <circle cx="14" cy="14" r="6.500" fill="#fff" /><circle cx="14" cy="14" r="5" fill="#3b78d8" />
        </Icon>
      </button>
      <button type="button" aria-label="Outlook" className={"ml-[2px] w-[55px] " + task + idle}>
        <Icon w={30} h={30}>
          <path d="M0 4Q0 1 3 1h26v28H0z" fill="#f6c552" stroke="#fae3a3" strokeWidth="2" />
          <path d="M14 4h13v22H8z" fill="#fdebb8" /><path d="M12 19h17v9H12z" fill="#fff3cf" stroke="#dfa436" /><path d="M12 19l9 6 8-6" stroke="#dfa436" />
          <ellipse cx="9.500" cy="12" rx="5" ry="6.500" stroke="#d97b0c" strokeWidth="4" />
          <circle cx="24.500" cy="13.500" r="5" fill="#fff" stroke="#c9a97a" /><path d="M22.500 12l2 2 2.500-3.500" stroke="#b0531e" />
        </Icon>
      </button>
      <span className="h-[39px] w-1 rounded-r-[3px] border border-l-0 border-[#123e63] bg-[#75b9df]" />
      <button type="button" aria-label="Foxit Reader" className={"ml-[2px] w-[60px] " + task + " from-[#e9f5fa] via-[#a5d2ea] to-[#d3ebf6]"}>
        <FoxitLogo size={32} />
      </button>
      <div className="ml-auto flex items-center">
        <button type="button" aria-label="Show hidden icons"><Icon w={7} h={4}><path d="M0 4h7L3.500 0z" fill="#fff" /></Icon></button>
        <Icon w={15} h={15} className="ml-[9px]">
          <defs><radialGradient id="led" cy=".3"><stop offset="0" stopColor="#b9f58a" /><stop offset="1" stopColor="#2fb51f" /></radialGradient></defs>
          <circle cx="7.500" cy="7.500" r="7.200" fill="url(#led)" />
        </Icon>
        <Icon w={15} h={14} className="ml-[9px]"><path d="M1 0v14" stroke="#fff" strokeWidth="1.400" /><path d="M3 1h5v1.500h6.500L13 7l-1 2H8V7H3z" fill="#fff" /></Icon>
        <Icon w={15} h={15} className="ml-[9px]"><rect x="4.700" y="3.700" width="9.600" height="7" stroke="#fff" strokeWidth="1.300" /><path d="M6 14h8M10 11v3" stroke="#fff" strokeWidth="1.300" /><path d="M.5 0v3.500h4V0M2.500 3.500V12H5" stroke="#fff" /></Icon>
        <Icon w={15} h={14} className="ml-[9px]"><path d="M0 4.500h3L7 1v12L3 9.500H0z" fill="#fff" /><path d="M9 5q1.500 2 0 4M11 3q3 4 0 8M13 1.500q3.500 5.500 0 11" stroke="#fff" /></Icon>
        <div className="ml-[19px] text-center font-['Open_Sans',sans-serif] text-[11px] leading-[17px]"><time className="block">12:16</time><time className="block">19/02/2014</time></div>
        <button type="button" aria-label="Show desktop" className="ml-3 h-[39px] w-[14px] border border-[#5c8fba] bg-linear-to-b from-[#3a78ae] to-[#174781]" />
      </div>
    </footer>
  );
}

export default function App() {
  return (
    <div className={"flex min-h-screen flex-col bg-[#f0f0f0] text-[11px] leading-[14px] text-[#222] " + ui}>
      <Header />
      <RibbonTabs />
      <Ribbon />
      <DocTabs />
      <div className="flex flex-1">
        <Sidebar />
        <div className="flex w-[14px] shrink-0 items-center bg-[#ababab]"><Icon w={5} h={44} className="ml-[2px] mt-[-80px]"><path d="M.5 0v44M2.500 0v44" stroke="#777" strokeDasharray="1 2" /></Icon></div>
        <Quote />
        <div className="w-1 shrink-0 bg-black" />
        <div className="w-[5px] shrink-0 bg-[#ababab]" />
        <ScrollBar />
      </div>
      <StatusBar />
      <TaskBar />
    </div>
  );
}
